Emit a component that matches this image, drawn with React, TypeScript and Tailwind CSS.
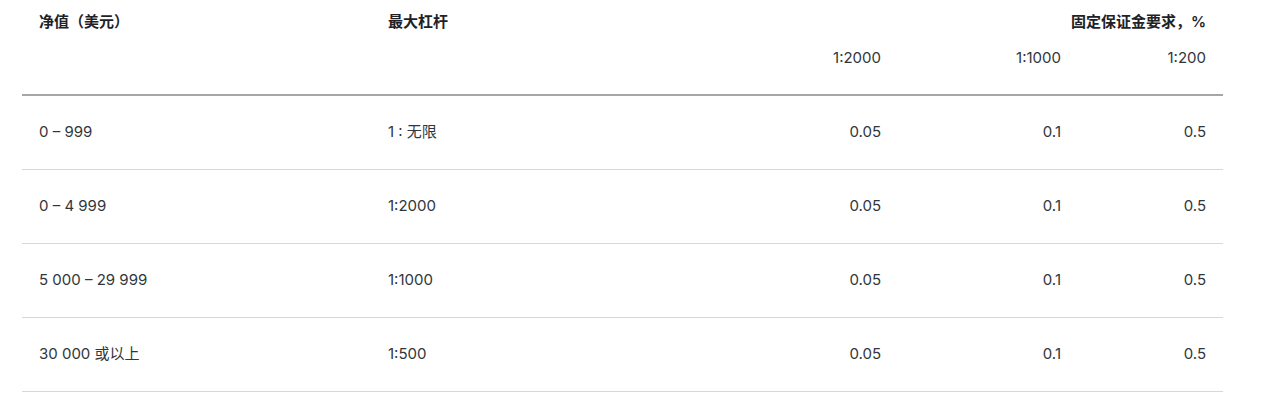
const ROWS = [
  ['0 – 999', '1 : 无限', '0.05', '0.1', '0.5'],
  ['0 – 4 999', '1:2000', '0.05', '0.1', '0.5'],
  ['5 000 – 29 999', '1:1000', '0.05', '0.1', '0.5'],
  ['30 000 或以上', '1:500', '0.05', '0.1', '0.5'],
]

const COLS = 'grid grid-cols-[349px_349px_178px_180px_145px]'

export default function App() {
  return (
    <div
      className="w-[1268px] h-[419px] bg-white text-[15px] text-[#30363c]"
      style={{ fontFamily: 'Inter, "Noto Sans CJK SC", sans-serif' }}
    >
      <div className="ml-[22px] w-[1201px]">
        <div className="pt-[11px] pb-[27px] border-b-2 border-[#a4a7a9]">
          <div className={`${COLS} h-5 items-center font-semibold text-[#1e2227]`}>
            <div className="pl-[17px]">净值（美元）</div>
            <div className="pl-[17px]">最大杠杆</div>
            <div className="col-span-3 pr-[17px] text-right">固定保证金要求，%</div>
          </div>
          <div className={`${COLS} h-5 mt-[16px] items-center`}>
            <div />
            <div />
            <div className="pr-[17px] text-right">1:2000</div>
            <div className="pr-[17px] text-right">1:1000</div>
            <div className="pr-[17px] text-right">1:200</div>
          </div>
        </div>
        {ROWS.map((r) => (
          <div key={r[0]} className={`${COLS} h-[74px] items-center border-b border-[#d6d8da]`}>
            <div className="pl-[17px]">{r[0]}</div>
            <div className="pl-[17px]">{r[1]}</div>
            <div className="pr-[17px] text-right">{r[2]}</div>
            <div className="pr-[17px] text-right">{r[3]}</div>
            <div className="pr-[17px] text-right">{r[4]}</div>
          </div>
        ))}
      </div>
    </div>
  )
}
